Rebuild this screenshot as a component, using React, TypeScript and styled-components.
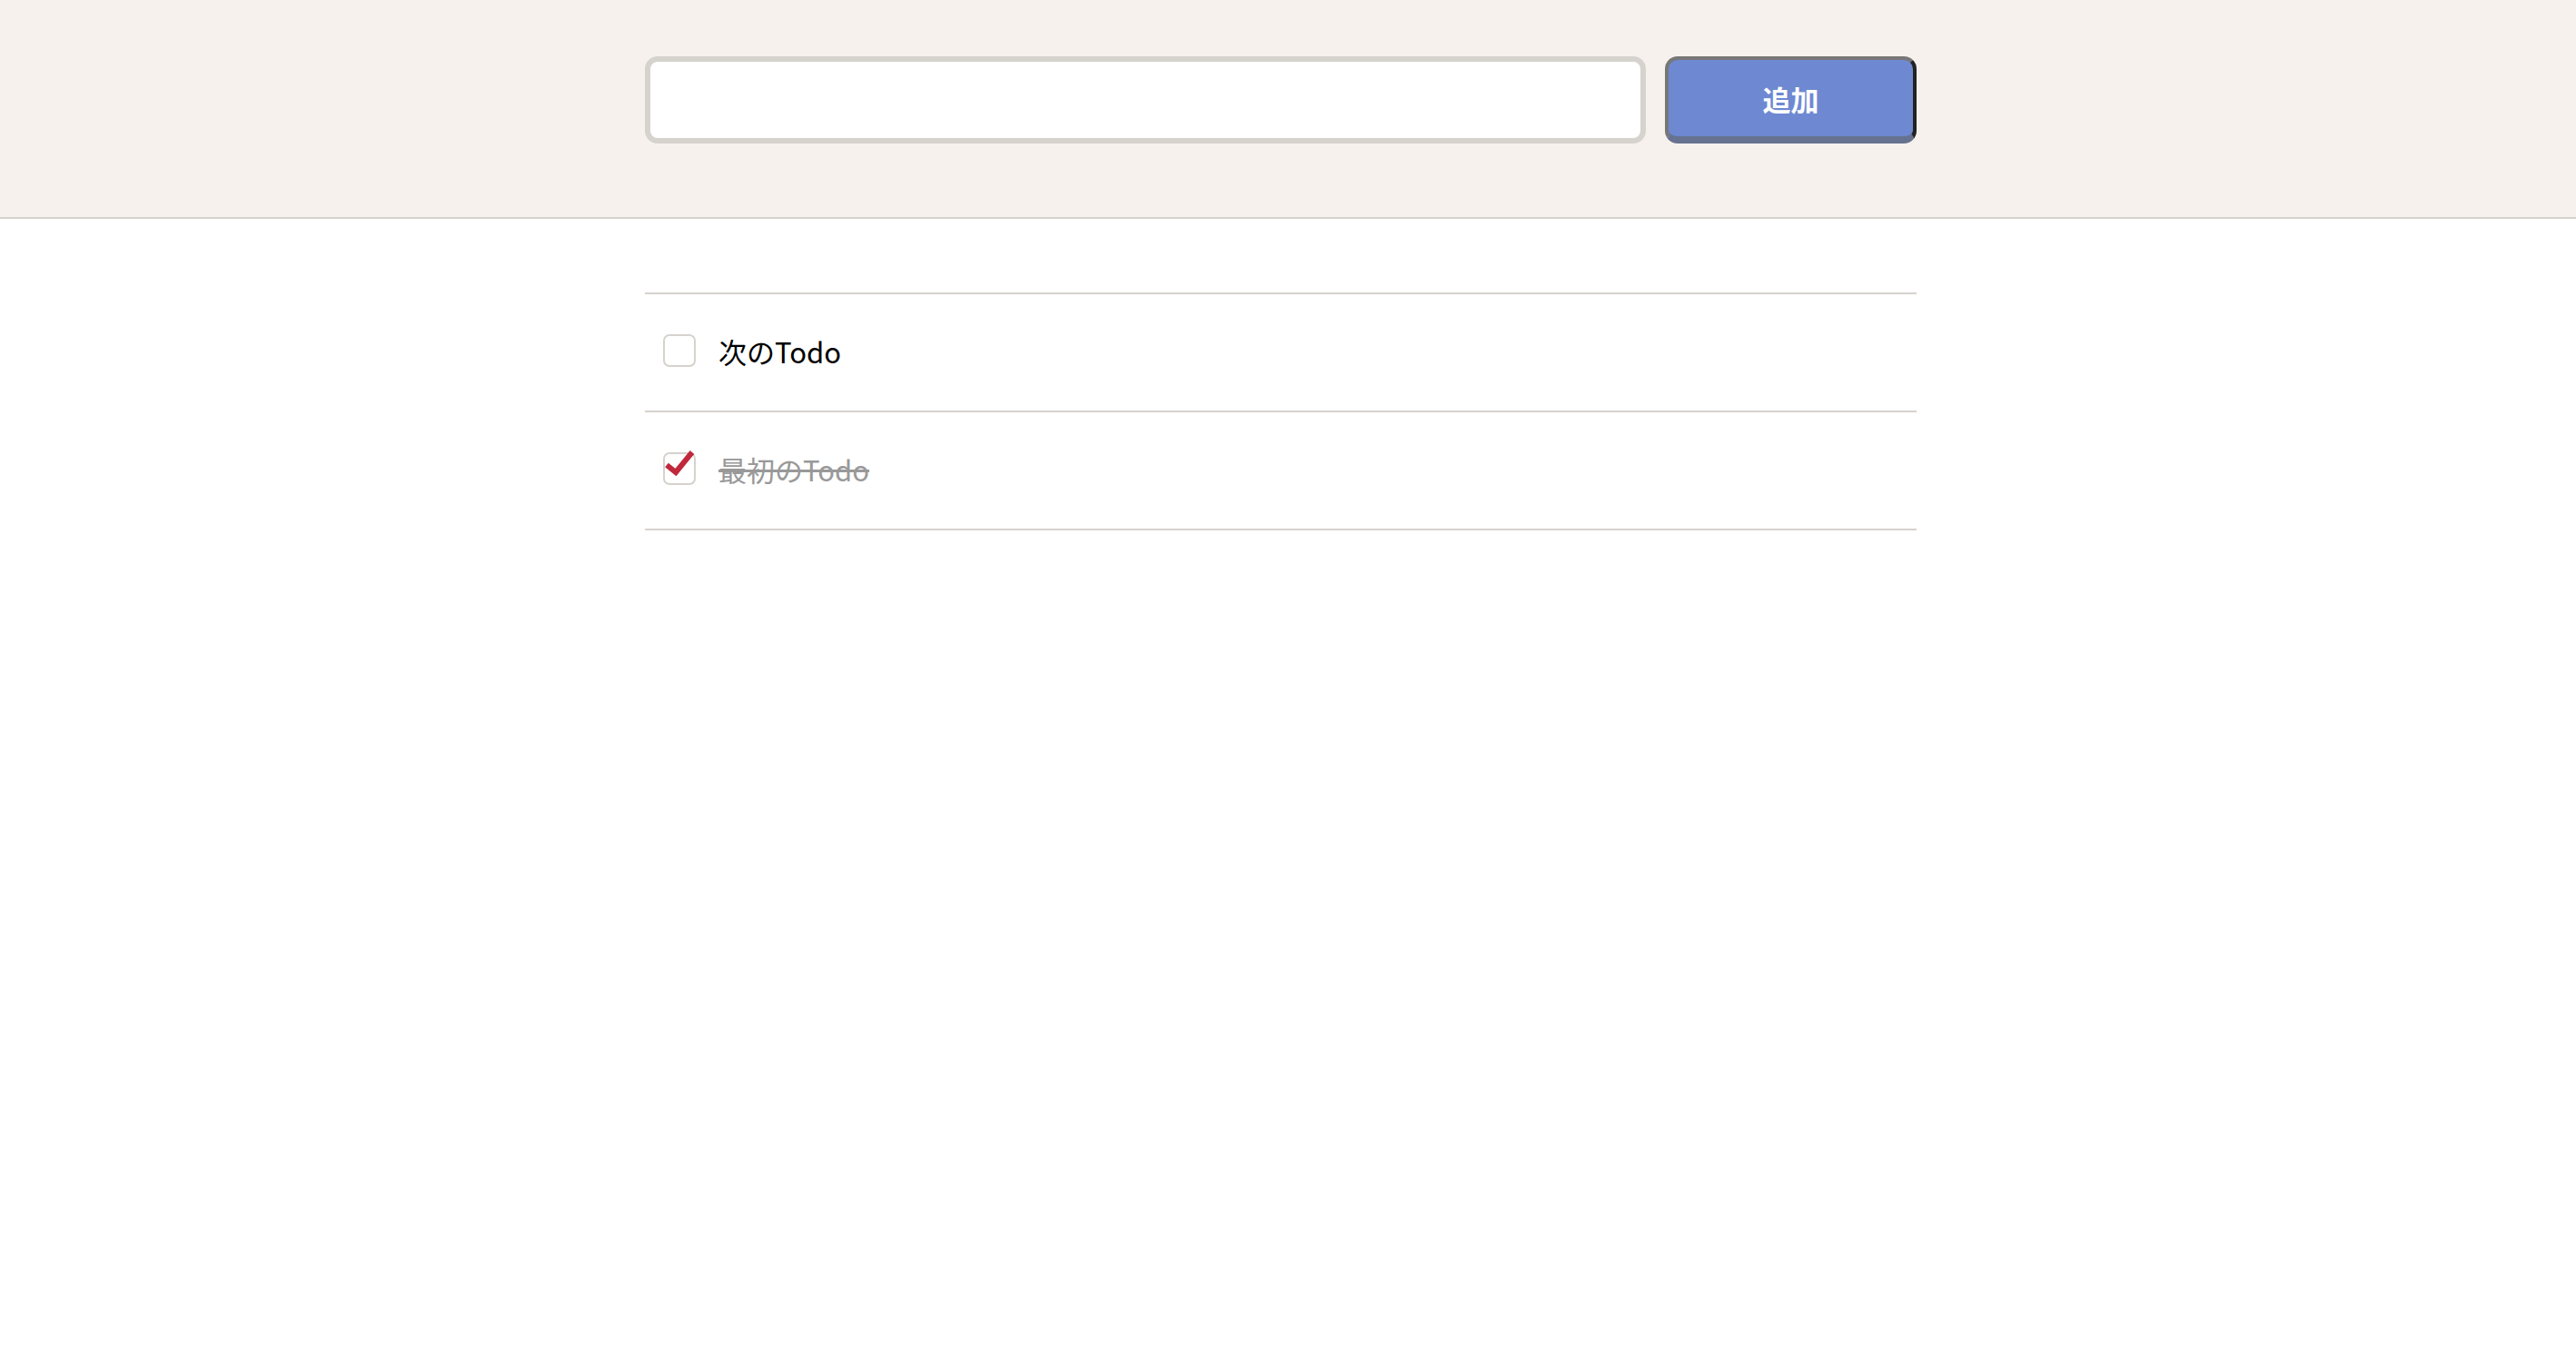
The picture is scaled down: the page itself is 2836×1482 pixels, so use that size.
import React, { useState } from "react";
import styled, { createGlobalStyle } from "styled-components";

const GlobalStyle = createGlobalStyle`
  html, body {
    margin: 0;
    padding: 0;
    background: #ffffff;
    font-family: "Noto Sans CJK JP", "Noto Sans", sans-serif;
  }
  * { box-sizing: border-box; }
`;

const Header = styled.header`
  background: #f6f1ed;
  border-bottom: 2px solid #d6d2cd;
  padding: 62px 0 81px;
`;

const Container = styled.div`
  width: 1416px;
  padding-right: 16px;
  margin: 0 auto;
`;

const Form = styled.form`
  display: flex;
  gap: 21px;
  margin: 0;
`;

const TextInput = styled.input`
  flex: 1;
  height: 96px;
  border: 6px solid #d6d2cd;
  border-radius: 14px;
  background: #ffffff;
  font-size: 32px;
  padding: 0 20px;
  outline: none;
  font-family: inherit;
`;

const AddButton = styled.button`
  width: 277px;
  height: 96px;
  background: #6e89d2;
  color: #ffffff;
  font-family: "Noto Sans CJK JP", sans-serif;
  font-weight: 700;
  font-size: 31px;
  border-top: 4px solid #777777;
  border-left: 4px solid #777777;
  border-right: 4px solid #222222;
  border-bottom: 8px solid #667290;
  border-radius: 14px;
  cursor: pointer;
  padding: 0;
  display: flex;
  align-items: center;
  justify-content: center;
`;

const List = styled.ul`
  list-style: none;
  margin: 81px 0 0;
  padding: 0;
`;

const Row = styled.li`
  display: flex;
  align-items: center;
  height: 130px;
  padding: 0 0 4px 20px;
  border-top: 2px solid #d6d2cd;
  &:last-child {
    height: 132px;
    border-bottom: 2px solid #d6d2cd;
  }
`;

const Box = styled.span`
  position: relative;
  width: 36px;
  height: 36px;
  border: 2px solid #d6d2cd;
  border-radius: 7px;
  background: #ffffff;
  flex-shrink: 0;
  cursor: pointer;
`;

const Check = styled.svg`
  position: absolute;
  left: 0;
  top: -4px;
  width: 36px;
  height: 36px;
  overflow: visible;
`;

const Label = styled.span<{ $done: boolean }>`
  margin-left: 25px;
  font-size: 31px;
  color: ${(p) => (p.$done ? "#999999" : "#000000")};
  text-decoration: ${(p) => (p.$done ? "line-through" : "none")};
  text-decoration-thickness: 3px;
`;

type Todo = { id: number; text: string; done: boolean };

export default function App() {
  const [todos, setTodos] = useState<Todo[]>([
    { id: 2, text: "次のTodo", done: false },
    { id: 1, text: "最初のTodo", done: true },
  ]);
  const [value, setValue] = useState("");

  const toggle = (id: number) =>
    setTodos((t) => t.map((x) => (x.id === id ? { ...x, done: !x.done } : x)));

  return (
    <>
      <GlobalStyle />
      <Header>
        <Container>
          <Form
            onSubmit={(e) => {
              e.preventDefault();
              if (!value.trim()) return;
              setTodos((t) => [{ id: Date.now(), text: value, done: false }, ...t]);
              setValue("");
            }}
          >
            <TextInput value={value} onChange={(e) => setValue(e.target.value)} />
            <AddButton type="submit">追加</AddButton>
          </Form>
        </Container>
      </Header>
      <Container>
        <List>
          {todos.map((t) => (
            <Row key={t.id}>
              <Box role="checkbox" aria-checked={t.done} onClick={() => toggle(t.id)}>
                {t.done && (
                  <Check viewBox="0 0 36 36">
                    <path
                      d="M2 16 L12 24 L30 2"
                      fill="none"
                      stroke="#c0283c"
                      strokeWidth="6"
                    />
                  </Check>
                )}
              </Box>
              <Label $done={t.done}>{t.text}</Label>
            </Row>
          ))}
        </List>
      </Container>
    </>
  );
}
